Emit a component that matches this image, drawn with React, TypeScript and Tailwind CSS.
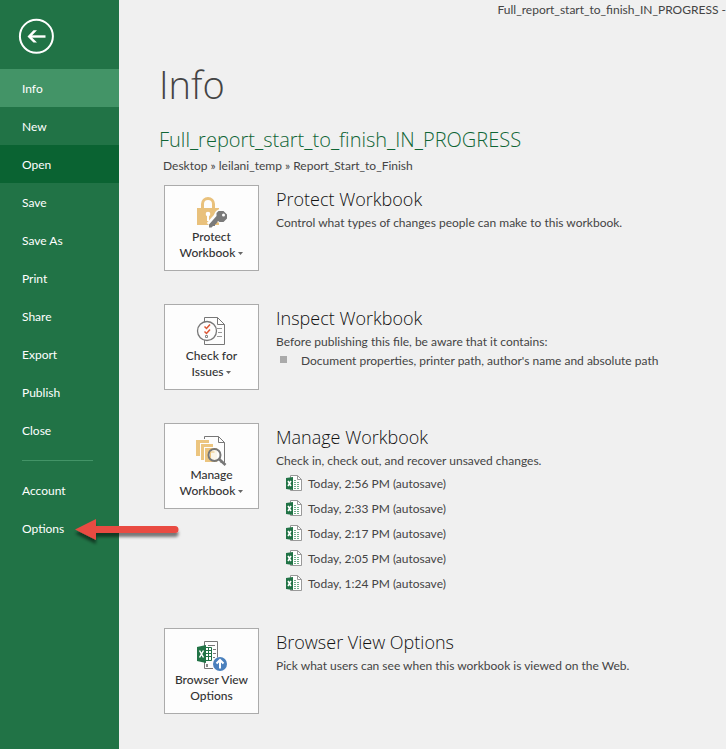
import type { ReactNode } from "react";

const recent = ["2:56", "2:33", "2:17", "2:05", "1:24"];

function NavItem({ label, tone = "" }: { label: string; tone?: string }) {
  return (
    <button type="button" className={`flex h-[38px] w-full items-center pt-0.5 pl-[22px] text-left text-xs text-white ${tone}`}>
      {label}
    </button>
  );
}

function LockIcon() {
  return (
    <svg width="32" height="32" viewBox="0 0 32 32" fill="none" aria-hidden="true">
      <path d="M6.500 12V7a5.500 5.500 0 0 1 11 0V12" stroke="#e9c17c" strokeWidth="3" />
      <path d="M1 11h22v17H1z" fill="#e9c17c" />
      <circle cx="12" cy="17" r="2.300" fill="#fff" />
      <path d="M11 18h2v6h-2z" fill="#fff" />
      <path d="M21 19 13 28" stroke="#fdfdfd" strokeWidth="6" />
      <circle cx="25" cy="19" r="7" fill="#fdfdfd" />
      <path d="M22.500 14h5l3.500 3.500v4l-3.500 3.500h-4l-1.500-1-2 3-1 .500v1.500h-2l-1.500 1.500H13v-3l7.500-8.500v-3z" fill="#7a7a7a" />
      <circle cx="27.500" cy="18" r="1.500" fill="#fff" />
    </svg>
  );
}

function CheckIcon() {
  return (
    <svg width="32" height="32" viewBox="0 0 32 32" fill="none" aria-hidden="true">
      <path d="M8.500 6V1.500h13l7 7v20h-20V24M21.500 1.500v7h7" stroke="#777" />
      <path d="M21 12.500h5M22 16.500h4M21 20.500h5" stroke="#999" />
      <circle cx="11" cy="15" r="9.500" fill="#fdfdfd" stroke="#777" strokeWidth="1.300" />
      <path d="m8.500 10.500 2 2 3.500-4M8.500 15.500l2 2 3.500-4" stroke="#dc5735" strokeWidth="1.500" />
      <path d="M9.500 19.500h2v2h-2z" stroke="#888" />
    </svg>
  );
}

function ManageIcon() {
  return (
    <svg width="32" height="32" viewBox="0 0 32 32" fill="none" aria-hidden="true">
      <path d="M8.500 4V1.500h14l6 6v20h-4M22.500 1.500v6h6" stroke="#777" />
      <path d="M0 5h13v3H4v13H0z" fill="#ecc57f" />
      <path d="M5 9h12v3H8v13H5z" fill="#ecc57f" />
      <path d="M9 13h12v14H9z" fill="#ecc57f" />
      <path d="M4.500 21V8.500H13M8.500 25V12.500H17" stroke="#fdfdfd" />
      <circle cx="18.500" cy="20" r="6" fill="#fdfdfd" fillOpacity=".85" stroke="#777" strokeWidth="2" />
      <path d="M14.500 23v-6h4" stroke="#ecc57f" />
      <path d="m23 24 6.500 6" stroke="#777" strokeWidth="2.600" />
    </svg>
  );
}

function BrowserIcon() {
  return (
    <svg width="32" height="32" viewBox="0 0 32 32" fill="none" aria-hidden="true">
      <path d="M8.500 6V1.500h13v16M8.500 21v7.500H17M12 5.500h7M17 9.500h3M17 13.500h3M17 17.500h2" stroke="#777" />
      <path d="M10 24h2v3h-2z" fill="#888" />
      <path d="M9.500 7.500h6v13h-6z" fill="#fff" stroke="#217346" />
      <path d="M10 10.500h5M10 13.500h5M10 16.500h5M12.500 8v12" stroke="#217346" />
      <path d="m1 7 9-2v18l-9-2z" fill="#217346" />
      <path d="m3.500 10.500 4 7M7.500 10.500l-4 7" stroke="#fff" strokeWidth="1.500" />
      <circle cx="24" cy="24" r="7" fill="#4a80bd" />
      <path d="M24 28.500v-8M20.500 23.500l3.500-3.500 3.500 3.500" stroke="#fff" strokeWidth="2" />
    </svg>
  );
}

function ExcelFileIcon() {
  return (
    <svg width="17" height="17" viewBox="0 0 17 17" fill="none" aria-hidden="true">
      <path d="M4.500 3V.500h7l4 4v11h-11V13" fill="#fff" stroke="#999" />
      <path d="M11.500.500v4h4" stroke="#999" />
      <path d="M8 5.500h2M8 7.500h6M8 9.500h6M8 11.500h6M8 13.500h6" stroke="#6fae8a" strokeDasharray="2 1" />
      <path d="m0 3 7-1v13l-7-1z" fill="#217346" />
      <path d="m2 6 3 5M5 6l-3 5" stroke="#fff" strokeWidth="1.500" />
    </svg>
  );
}

function Section({ icon, lines, menu = false, title, text, children }: {
  icon: ReactNode; lines: [string, string]; menu?: boolean; title: string; text: string; children?: ReactNode;
}) {
  return (
    <section className="flex min-h-[87px] items-start gap-[17px]">
      <button type="button" className="flex h-[86px] w-[95px] shrink-0 flex-col items-center border border-[#ababab] bg-[#fdfdfd] pt-[11px] text-xs leading-4 font-medium text-[#333]">
        {icon}
        <span>{lines[0]}</span>
        <span className="flex items-center gap-[3px]">
          {lines[1]}
          {menu && <svg width="5" height="3" viewBox="0 0 5 3" aria-hidden="true"><path d="M0 0h5L2.500 3z" fill="#666" /></svg>}
        </span>
      </button>
      <div className="min-w-0">
        <h3 className="font-['Open_Sans',sans-serif] text-lg leading-7 font-light text-[#111]">{title}</h3>
        <p className="text-xs leading-5">{text}</p>
        {children}
      </div>
    </section>
  );
}

export default function App() {
  return (
    <div className="relative flex min-h-screen bg-[#f0f0f0] font-['Lato','Open_Sans',sans-serif] text-[#444]">
      <nav className="w-[119px] shrink-0 bg-[#217346]">
        <button type="button" aria-label="Back" className="mt-[18px] mb-[15px] ml-[18px] block">
          <svg width="36" height="36" viewBox="0 0 36 36" fill="none" stroke="#fff" aria-hidden="true">
            <circle cx="18.400" cy="18.300" r="16.500" strokeWidth="2" />
            <path d="M27.500 18.500H12" strokeWidth="2.400" />
            <path d="M19 12.300h-3.500l-6 6.200 6 6H19l-6-6z" fill="#fff" stroke="none" />
          </svg>
        </button>
        <NavItem label="Info" tone="bg-[#439467]" />
        <NavItem label="New" />
        <NavItem label="Open" tone="bg-[#0a6332]" />
        <NavItem label="Save" />
        <NavItem label="Save As" />
        <NavItem label="Print" />
        <NavItem label="Share" />
        <NavItem label="Export" />
        <NavItem label="Publish" />
        <NavItem label="Close" />
        <hr className="mt-[11px] mr-[26px] mb-[10px] ml-[22px] border-[#439467]" />
        <NavItem label="Account" />
        <NavItem label="Options" />
      </nav>
      <main className="min-w-0 flex-1 pl-[44px]">
        <p className="text-right text-xs leading-5 whitespace-nowrap">Full_report_start_to_finish_IN_PROGRESS -</p>
        <h1 className="-ml-1 pt-9 font-['Open_Sans',sans-serif] text-[38px] leading-14 font-light">Info</h1>
        <h2 className="-ml-1 mt-3 font-['Open_Sans',sans-serif] text-xl leading-8 font-light text-[#0f6535]">Full_report_start_to_finish_IN_PROGRESS</h2>
        <p className="text-xs leading-5">Desktop » leilani_temp » Report_Start_to_Finish</p>
        <div className="mt-[9px] ml-px flex flex-col gap-8 pb-8">
          <Section icon={<LockIcon />} lines={["Protect", "Workbook"]} menu title="Protect Workbook" text="Control what types of changes people can make to this workbook." />
          <Section icon={<CheckIcon />} lines={["Check for", "Issues"]} menu title="Inspect Workbook" text="Before publishing this file, be aware that it contains:">
            <ul>
              <li className="flex items-start gap-[14px] pl-1 text-xs leading-[18px]">
                <span className="mt-1 size-[7px] shrink-0 bg-[#aaa]" />
                Document properties, printer path, author's name and absolute path
              </li>
            </ul>
          </Section>
          <Section icon={<ManageIcon />} lines={["Manage", "Workbook"]} menu title="Manage Workbook" text="Check in, check out, and recover unsaved changes.">
            <ul>
              {recent.map((time) => (
                <li key={time}>
                  <button type="button" className="flex h-[25px] items-center gap-[5px] pl-[10px] text-xs">
                    <ExcelFileIcon />
                    Today, {time} PM (autosave)
                  </button>
                </li>
              ))}
            </ul>
          </Section>
          <Section icon={<BrowserIcon />} lines={["Browser View", "Options"]} title="Browser View Options" text="Pick what users can see when this workbook is viewed on the Web." />
        </div>
      </main>
      <svg className="absolute top-[514px] left-[72px]" width="112" height="36" viewBox="0 0 112 36" aria-hidden="true">
        <defs>
          <filter id="shadow" x="-10%" y="-30%" width="120%" height="180%">
            <feDropShadow dx="0" dy="4" stdDeviation="1.800" floodOpacity=".5" />
          </filter>
        </defs>
        <path d="M3 15.500 24 5v7h79a3.500 3.500 0 0 1 0 7H24v7z" fill="#e94b43" filter="url(#shadow)" />
      </svg>
    </div>
  );
}
